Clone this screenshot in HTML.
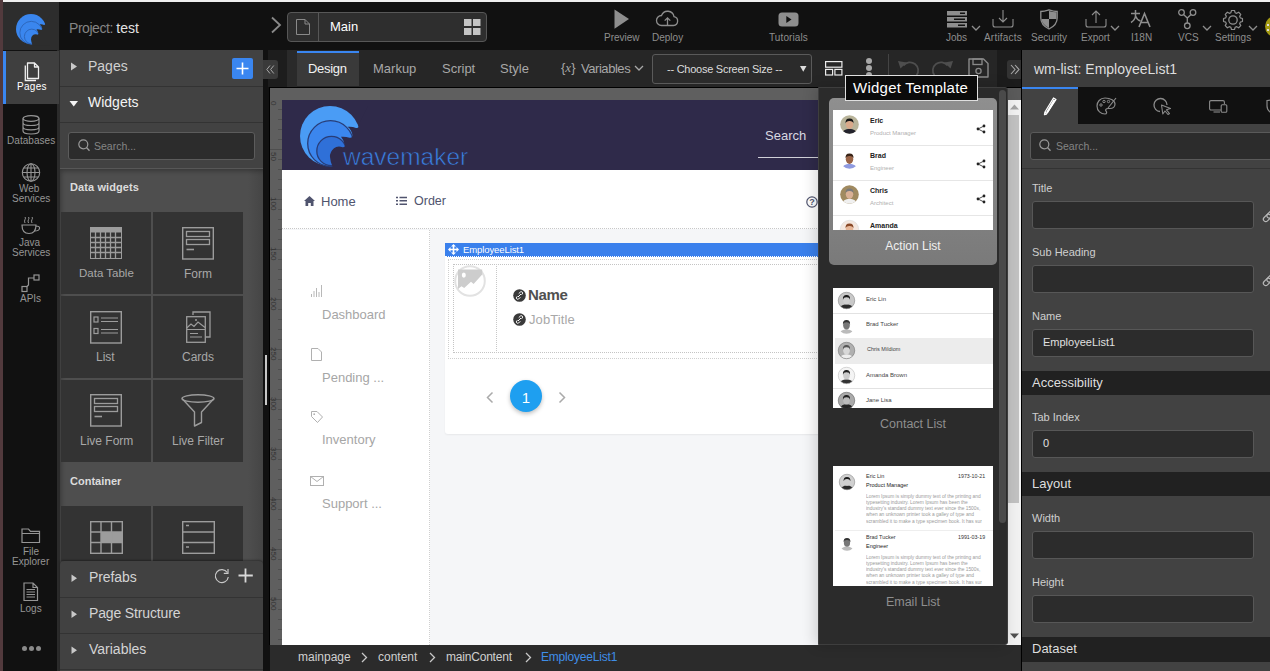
<!DOCTYPE html>
<html><head><meta charset="utf-8">
<style>
*{box-sizing:border-box;margin:0;padding:0}
html,body{width:1270px;height:671px;overflow:hidden;background:#111;font-family:"Liberation Sans",sans-serif;position:relative}
.a{position:absolute}
svg{position:absolute;overflow:visible}
.t{position:absolute;white-space:nowrap;line-height:1}
</style></head><body>
<!-- ===== TOP BAR ===== -->
<div class="a" style="left:0;top:0;width:1270px;height:2px;background:#efefef"></div>
<div class="a" style="left:0;top:0;width:3px;height:671px;background:#523a3d"></div>
<div class="a" style="left:3px;top:2px;width:1267px;height:48px;background:#111"></div>
<div class="a" style="left:3px;top:2px;width:56px;height:48px;background:#2d2d2d"></div>
<!-- small logo -->
<svg style="left:15px;top:13px" width="32" height="32" viewBox="0 0 64 64">
 <g transform="translate(-2,-2)">
 <circle cx="34" cy="34" r="30" fill="#3a86ee"/>
 <circle cx="34.5" cy="41.5" r="22.8" fill="#3a86ee" stroke="#2b5fae" stroke-width="1.6"/>
 <circle cx="35.5" cy="49" r="14.7" fill="#3a86ee" stroke="#2b5fae" stroke-width="1.6"/>
 <path d="M72,4 L63.5,21 Q63.6,26.4 60,25.9 Q56,24.2 51.5,24.8 Q55.5,27.5 56.5,33.4 Q56.6,36.2 53.5,35.7 Q49,34.3 45,34.8 Q47.8,38 48.9,43 Q49.3,45.6 46.5,45.2 Q41.5,43.6 38,46.2 Q33.6,50 34,55 Q34.4,60 36.5,64.6 L36.5,67 L72,67 Z" fill="#2d2d2d"/>
 </g>
</svg>
<div class="t" style="left:69px;top:21px;font-size:14px;color:#858585;letter-spacing:-0.45px">Project: <span style="color:#e2e2e2;letter-spacing:0">test</span></div>
<!-- chevron -->
<svg style="left:270px;top:16px" width="12" height="18"><path d="M2,1.5 L10,9 L2,16.5" fill="none" stroke="#8a8a8a" stroke-width="1.8"/></svg>
<!-- page selector -->
<div class="a" style="left:287px;top:12px;width:200px;height:30px;border:1px solid #575757;border-radius:4px;background:#2e2e2e"></div>
<div class="a" style="left:318px;top:13px;width:1px;height:28px;background:#575757"></div>
<svg style="left:296px;top:19px" width="14" height="16"><path d="M0.5,0.5 H9 L13.5,5 V15.5 H0.5 Z M9,0.5 V5 H13.5" fill="none" stroke="#8a8a8a" stroke-width="1"/></svg>
<div class="t" style="left:330px;top:20px;font-size:13px;color:#fff">Main</div>
<svg style="left:464px;top:19px" width="17" height="16"><rect x="0" y="0" width="7.5" height="7" fill="#c4c4c4"/><rect x="9" y="0" width="7.5" height="7" fill="#c4c4c4"/><rect x="0" y="9" width="7.5" height="7" fill="#c4c4c4"/><rect x="9" y="9" width="7.5" height="7" fill="#c4c4c4"/></svg>
<!-- Preview -->
<svg style="left:614px;top:9px" width="16" height="21"><path d="M0.5,0.5 L15,10 L0.5,19.8 Z" fill="#8e8e8e"/></svg>
<div class="t" style="left:604px;top:33px;font-size:10px;color:#8e8e8e">Preview</div>
<!-- Deploy -->
<svg style="left:656px;top:10px" width="23" height="17"><path d="M5.5,15.5 H17.5 A4.5,4.5 0 0 0 18,6.6 A6.5,6.5 0 0 0 5.5,5.5 A5,5 0 0 0 5.5,15.5 Z" fill="none" stroke="#8e8e8e" stroke-width="1.3"/><path d="M11.5,15.5 V8 M8.7,10.6 L11.5,7.8 L14.3,10.6" fill="none" stroke="#8e8e8e" stroke-width="1.3"/></svg>
<div class="t" style="left:652px;top:33px;font-size:10px;color:#8e8e8e">Deploy</div>
<!-- Tutorials -->
<svg style="left:778px;top:12px" width="21" height="15"><rect x="0.5" y="0.5" width="20" height="14" rx="3.5" fill="#8e8e8e"/><path d="M8.3,4 L13.5,7.5 L8.3,11 Z" fill="#111"/></svg>
<div class="t" style="left:769px;top:33px;font-size:10px;color:#8e8e8e;letter-spacing:0.1px">Tutorials</div>
<!-- Jobs -->
<svg style="left:947px;top:11px" width="21" height="17"><rect x="0" y="0" width="20" height="4.5" fill="#8e8e8e"/><rect x="0" y="6" width="20" height="4.5" fill="#8e8e8e"/><rect x="0" y="12" width="20" height="4.5" fill="#8e8e8e"/><rect x="13" y="1.5" width="5" height="1.5" fill="#111"/><rect x="7" y="7.5" width="11" height="1.5" fill="#111"/><rect x="11" y="13.5" width="7" height="1.5" fill="#111"/></svg>
<svg style="left:971px;top:25px" width="10" height="7"><path d="M1,1 L5,5 L9,1" fill="none" stroke="#8e8e8e" stroke-width="1.3"/></svg>
<div class="t" style="left:946px;top:33px;font-size:10px;color:#8e8e8e">Jobs</div>
<!-- Artifacts -->
<svg style="left:992px;top:10px" width="22" height="18"><path d="M1,9 V15 Q1,17 3,17 H19 Q21,17 21,15 V9" fill="none" stroke="#8e8e8e" stroke-width="1.1"/><path d="M11,0 V12 M7,8 L11,12 L15,8" fill="none" stroke="#8e8e8e" stroke-width="1.1"/></svg>
<div class="t" style="left:984px;top:33px;font-size:10px;color:#8e8e8e;letter-spacing:0.2px">Artifacts</div>
<!-- Security -->
<svg style="left:1040px;top:9px" width="18" height="21"><path d="M9,0.8 Q4,2.5 0.8,2.5 V9 Q0.8,16 9,20 Q17.2,16 17.2,9 V2.5 Q14,2.5 9,0.8 Z" fill="#111" stroke="#8e8e8e" stroke-width="1.3"/><path d="M9,2 Q13,3.2 16.5,3.2 V10 H9 Z M9,10 V19 Q2,15.5 1.5,10 Z" fill="#8e8e8e"/></svg>
<div class="t" style="left:1031px;top:33px;font-size:10px;color:#8e8e8e">Security</div>
<!-- Export -->
<svg style="left:1085px;top:10px" width="22" height="18"><path d="M1,9 V15 Q1,17 3,17 H19 Q21,17 21,15 V9" fill="none" stroke="#8e8e8e" stroke-width="1.1"/><path d="M11,13 V1 M7,5 L11,1 L15,5" fill="none" stroke="#8e8e8e" stroke-width="1.1"/></svg>
<svg style="left:1110px;top:25px" width="10" height="7"><path d="M1,1 L5,5 L9,1" fill="none" stroke="#8e8e8e" stroke-width="1.3"/></svg>
<div class="t" style="left:1081px;top:33px;font-size:10px;color:#8e8e8e">Export</div>
<!-- I18N -->
<svg style="left:1130px;top:10px" width="22" height="18"><path d="M1,3.5 H10 M5.5,0 V6 Q5,10 1,12.5 M5.5,6 Q7,10 10.5,11" fill="none" stroke="#8e8e8e" stroke-width="1.5"/><path d="M9,17 L14.5,3.5 L20,17 M11,12.5 H18" fill="none" stroke="#8e8e8e" stroke-width="1.6"/></svg>
<div class="t" style="left:1131px;top:33px;font-size:10px;color:#8e8e8e">I18N</div>
<!-- VCS -->
<svg style="left:1178px;top:9px" width="19" height="21"><circle cx="3.5" cy="3.5" r="2.8" fill="none" stroke="#8e8e8e" stroke-width="1.3"/><circle cx="15" cy="3.5" r="2.8" fill="none" stroke="#8e8e8e" stroke-width="1.3"/><circle cx="9.3" cy="16.8" r="2.8" fill="none" stroke="#8e8e8e" stroke-width="1.3"/><path d="M5.5,5.5 L9.3,9 L13,5.5 M9.3,9 V14" fill="none" stroke="#8e8e8e" stroke-width="1.3"/></svg>
<svg style="left:1202px;top:25px" width="10" height="7"><path d="M1,1 L5,5 L9,1" fill="none" stroke="#8e8e8e" stroke-width="1.3"/></svg>
<div class="t" style="left:1178px;top:33px;font-size:10px;color:#8e8e8e">VCS</div>
<!-- Settings -->
<svg style="left:1222px;top:9px" width="22" height="22" viewBox="-11 -11 22 22"><path d="M-2.12,-7.30 L-1.50,-9.48 L1.50,-9.48 L2.12,-7.30 L3.66,-6.66 L5.64,-7.77 L7.77,-5.64 L6.66,-3.66 L7.30,-2.12 L9.48,-1.50 L9.48,1.50 L7.30,2.12 L6.66,3.66 L7.77,5.64 L5.64,7.77 L3.66,6.66 L2.12,7.30 L1.50,9.48 L-1.50,9.48 L-2.12,7.30 L-3.66,6.66 L-5.64,7.77 L-7.77,5.64 L-6.66,3.66 L-7.30,2.12 L-9.48,1.50 L-9.48,-1.50 L-7.30,-2.12 L-6.66,-3.66 L-7.77,-5.64 L-5.64,-7.77 L-3.66,-6.66 Z" fill="none" stroke="#8e8e8e" stroke-width="1.2" stroke-linejoin="round"/><circle cx="0" cy="0" r="4.2" fill="none" stroke="#8e8e8e" stroke-width="1.3"/></svg>
<svg style="left:1248px;top:25px" width="10" height="7"><path d="M1,1 L5,5 L9,1" fill="none" stroke="#8e8e8e" stroke-width="1.3"/></svg>
<div class="t" style="left:1215px;top:33px;font-size:10px;color:#8e8e8e">Settings</div>
<!-- avatar -->
<div class="a" style="left:1265px;top:16px;width:21px;height:21px;border-radius:50%;background:#a39a12"></div>
<div class="a" style="left:1267px;top:24px;width:2px;height:2px;background:#ddd"></div>
<div class="a" style="left:1267px;top:29px;width:2px;height:2px;background:#ddd"></div>
<!-- ===== LEFT ICON SIDEBAR ===== -->
<div class="a" style="left:3px;top:50px;width:54px;height:621px;background:#111"></div>
<div class="a" style="left:57px;top:50px;width:3px;height:621px;background:#2b2b2b"></div>
<div class="a" style="left:3px;top:51px;width:56px;height:53px;background:#3f3f3f"></div>
<div class="a" style="left:3px;top:51px;width:3px;height:53px;background:#3a86f0"></div>
<!-- Pages icon -->
<svg style="left:23px;top:62px" width="18" height="20"><path d="M4.5,1 H11.5 L15.5,5 V16.5 H4.5 Z M11.5,1 V5 H15.5" fill="none" stroke="#f0f0f0" stroke-width="1.3" stroke-linejoin="round"/><path d="M2.3,3.5 V18.5 H13" fill="none" stroke="#f0f0f0" stroke-width="1.3"/></svg>
<div class="t" style="left:17px;top:82px;font-size:10px;color:#fff;letter-spacing:0.3px">Pages</div>
<!-- Databases -->
<svg style="left:22px;top:115px" width="18" height="20"><ellipse cx="9" cy="3.5" rx="8" ry="2.8" fill="none" stroke="#959595" stroke-width="1.2"/><path d="M1,3.5 V16 Q1,19 9,19 Q17,19 17,16 V3.5 M1,7.7 Q1,10.5 9,10.5 Q17,10.5 17,7.7 M1,12 Q1,14.8 9,14.8 Q17,14.8 17,12" fill="none" stroke="#959595" stroke-width="1.2"/></svg>
<div class="t" style="left:7px;top:136px;font-size:10px;color:#959595;letter-spacing:0.05px">Databases</div>
<!-- Web Services -->
<svg style="left:21px;top:163px" width="20" height="19"><circle cx="10" cy="9.5" r="8.7" fill="none" stroke="#959595" stroke-width="1.1"/><ellipse cx="10" cy="9.5" rx="4" ry="8.7" fill="none" stroke="#959595" stroke-width="1.1"/><path d="M10,0.8 V18.2 M1.3,9.5 H18.7 M2.5,5 H17.5 M2.5,14 H17.5" fill="none" stroke="#959595" stroke-width="1.1"/></svg>
<div class="t" style="left:19px;top:184px;font-size:10px;color:#959595">Web</div>
<div class="t" style="left:12px;top:194px;font-size:10px;color:#959595">Services</div>
<!-- Java Services -->
<svg style="left:21px;top:217px" width="20" height="18"><path d="M4,6 Q3,4 4,2.5 Q5,1 4,0 M7.5,6 Q6.5,4 7.5,2.5 Q8.5,1 7.5,0 M11,6 Q10,4 11,2.5 Q12,1 11,0" fill="none" stroke="#959595" stroke-width="1"/><path d="M1,8 H15 Q15,16.5 8,16.5 Q1,16.5 1,8 Z M15,9 Q19,9 18.5,11.5 Q18,14 13.5,14" fill="none" stroke="#959595" stroke-width="1.2"/></svg>
<div class="t" style="left:19px;top:238px;font-size:10px;color:#959595">Java</div>
<div class="t" style="left:12px;top:248px;font-size:10px;color:#959595">Services</div>
<!-- APIs -->
<svg style="left:21px;top:274px" width="20" height="19"><rect x="1" y="12.5" width="5" height="5" fill="none" stroke="#959595" stroke-width="1.2"/><rect x="13" y="1" width="5" height="5" fill="none" stroke="#959595" stroke-width="1.2"/><path d="M6,12.5 L7.5,11 V4 L13,4" fill="none" stroke="#959595" stroke-width="1.2"/></svg>
<div class="t" style="left:20px;top:294px;font-size:10px;color:#959595">APIs</div>
<!-- File Explorer -->
<svg style="left:21px;top:528px" width="20" height="16"><path d="M1,1 H7.5 L9.5,3.3 H18.5 V14.5 H1 Z M1,5.5 H18.5" fill="none" stroke="#959595" stroke-width="1.2"/></svg>
<div class="t" style="left:23px;top:547px;font-size:10px;color:#959595">File</div>
<div class="t" style="left:12px;top:557px;font-size:10px;color:#959595">Explorer</div>
<!-- Logs -->
<svg style="left:23px;top:582px" width="16" height="20"><path d="M1,1 H10 L14.5,5.5 V18.5 H1 Z M10,1 V5.5 H14.5" fill="none" stroke="#959595" stroke-width="1.2"/><path d="M3.5,7.5 H12 M3.5,10 H12 M3.5,12.5 H12 M3.5,15 H12" stroke="#959595" stroke-width="1"/></svg>
<div class="t" style="left:20px;top:604px;font-size:10px;color:#959595">Logs</div>
<!-- dots -->
<div class="a" style="left:22px;top:646px;width:5px;height:5px;border-radius:50%;background:#8a8a8a"></div>
<div class="a" style="left:29px;top:646px;width:5px;height:5px;border-radius:50%;background:#8a8a8a"></div>
<div class="a" style="left:36px;top:646px;width:5px;height:5px;border-radius:50%;background:#8a8a8a"></div>
<!-- ===== LEFT PANEL ===== -->
<div class="a" style="left:60px;top:50px;width:203px;height:621px;background:#424242"></div>
<!-- Pages row -->
<div class="a" style="left:60px;top:86px;width:203px;height:1px;background:#333"></div>
<svg style="left:70px;top:62px" width="8" height="9"><path d="M1,0.5 L7,4.5 L1,8.5 Z" fill="#c8c8c8"/></svg>
<div class="t" style="left:88px;top:59px;font-size:14px;color:#d0d0d0">Pages</div>
<div class="a" style="left:232px;top:58px;width:21px;height:21px;border-radius:2px;background:#3a86f0"></div>
<svg style="left:232px;top:58px" width="21" height="21"><path d="M10.5,4.5 V16.5 M4.5,10.5 H16.5" stroke="#fff" stroke-width="1.6"/></svg>
<!-- Widgets row -->
<div class="a" style="left:60px;top:122px;width:203px;height:1px;background:#333"></div>
<svg style="left:69px;top:100px" width="10" height="8"><path d="M0.5,1 L9,1 L4.75,6.5 Z" fill="#f4f4f4"/></svg>
<div class="t" style="left:88px;top:95px;font-size:14px;color:#f4f4f4">Widgets</div>
<!-- search -->
<div class="a" style="left:68px;top:132px;width:187px;height:28px;border:1px solid #5c5c5c;border-radius:3px;background:#2c2c2c"></div>
<svg style="left:78px;top:139px" width="12" height="13"><circle cx="5.3" cy="5.3" r="4.5" fill="none" stroke="#9a9a9a" stroke-width="1.2"/><path d="M8.5,8.5 L11.5,11.8" stroke="#9a9a9a" stroke-width="1.3"/></svg>
<div class="t" style="left:94px;top:141px;font-size:10.5px;color:#858585">Search...</div>
<div class="a" style="left:60px;top:168px;width:203px;height:1px;background:#575757"></div>
<!-- widgets scroll area -->
<div class="a" style="left:60px;top:169px;width:203px;height:392px;background:#4e4e4e;overflow:hidden">
 <div class="a" style="left:188px;top:0;width:15px;height:392px;background:linear-gradient(90deg,#4e4e4e,#454545)"></div>
 <div class="a" style="left:0;top:0;width:203px;height:392px;box-shadow:inset 3px 4px 5px -2px rgba(0,0,0,0.3)"></div>
</div>
<div class="t" style="left:70px;top:182px;font-size:11px;font-weight:bold;color:#dcdcdc;letter-spacing:0.1px">Data widgets</div>
<!-- tiles -->
<div class="a" style="left:61px;top:212px;width:90px;height:82px;background:#333"></div>
<div class="a" style="left:153px;top:212px;width:90px;height:82px;background:#333"></div>
<div class="a" style="left:61px;top:296px;width:90px;height:82px;background:#333"></div>
<div class="a" style="left:153px;top:296px;width:90px;height:82px;background:#333"></div>
<div class="a" style="left:61px;top:380px;width:90px;height:82px;background:#333"></div>
<div class="a" style="left:153px;top:380px;width:90px;height:82px;background:#333"></div>
<div class="a" style="left:61px;top:506px;width:90px;height:55px;background:#333"></div>
<div class="a" style="left:153px;top:506px;width:90px;height:55px;background:#333"></div>
<!-- Data Table icon -->
<svg style="left:90px;top:227px" width="32" height="32"><rect x="0.5" y="0.5" width="31" height="31" fill="none" stroke="#9c9c9c" stroke-width="1"/><rect x="0.5" y="0.5" width="31" height="5" fill="#9c9c9c"/><path d="M0.5,10.5 H31.5 M0.5,15.5 H31.5 M0.5,20.5 H31.5 M0.5,25.5 H31.5 M5.5,5 V31.5 M10.5,5 V31.5 M15.5,5 V31.5 M20.5,5 V31.5 M25.5,5 V31.5" stroke="#9c9c9c" stroke-width="1.3"/></svg>
<div class="t" style="left:79px;top:268px;font-size:11.5px;color:#a8a8a8">Data Table</div>
<!-- Form icon -->
<svg style="left:182px;top:227px" width="32" height="33"><rect x="0.7" y="0.7" width="30.6" height="31.3" fill="none" stroke="#9c9c9c" stroke-width="1.4"/><rect x="4.5" y="4.5" width="23" height="5" fill="none" stroke="#9c9c9c" stroke-width="1.3"/><rect x="4.5" y="12.5" width="23" height="5" fill="none" stroke="#9c9c9c" stroke-width="1.3"/><path d="M4.5,22.5 H12" stroke="#9c9c9c" stroke-width="1.6"/></svg>
<div class="t" style="left:184px;top:268px;font-size:12px;color:#a8a8a8">Form</div>
<!-- List icon -->
<svg style="left:90px;top:311px" width="32" height="33"><rect x="0.7" y="0.7" width="30.6" height="31.3" fill="none" stroke="#9c9c9c" stroke-width="1.4"/><rect x="4" y="6" width="4" height="5" fill="none" stroke="#9c9c9c" stroke-width="1.2"/><rect x="4" y="17.5" width="4" height="5" fill="none" stroke="#9c9c9c" stroke-width="1.2"/><path d="M11,7 H28 M11,10.5 H28 M11,18.5 H28 M11,22 H28" stroke="#9c9c9c" stroke-width="1.2"/></svg>
<div class="t" style="left:96px;top:351px;font-size:12px;color:#a8a8a8">List</div>
<!-- Cards icon -->
<svg style="left:186px;top:311px" width="25" height="32"><path d="M7,4 V1 H24 V26 H19.5" fill="none" stroke="#9c9c9c" stroke-width="1.3"/><rect x="0.7" y="5.7" width="18.6" height="25.6" fill="none" stroke="#9c9c9c" stroke-width="1.3"/><path d="M0.7,17 L5,13 L8,15.5 L12,11 L19,16.5" fill="none" stroke="#9c9c9c" stroke-width="1.2"/><circle cx="10" cy="9" r="1" fill="#9c9c9c"/><path d="M0.7,18.5 H19 M4,22.5 H12 M4,26 H16" stroke="#9c9c9c" stroke-width="1.2"/></svg>
<div class="t" style="left:182px;top:351px;font-size:12px;color:#a8a8a8">Cards</div>
<!-- Live Form icon -->
<svg style="left:90px;top:394px" width="32" height="33"><rect x="0.7" y="0.7" width="30.6" height="31.3" fill="none" stroke="#9c9c9c" stroke-width="1.4"/><rect x="4.5" y="4.5" width="23" height="5" fill="none" stroke="#9c9c9c" stroke-width="1.3"/><rect x="4.5" y="12.5" width="23" height="5" fill="none" stroke="#9c9c9c" stroke-width="1.3"/><path d="M4.5,22.5 H12" stroke="#9c9c9c" stroke-width="1.6"/></svg>
<div class="t" style="left:80px;top:435px;font-size:12px;color:#a8a8a8">Live Form</div>
<!-- Live Filter icon -->
<svg style="left:181px;top:394px" width="34" height="33"><ellipse cx="17" cy="4.5" rx="16" ry="3.8" fill="none" stroke="#9c9c9c" stroke-width="1.4"/><path d="M1,4.5 L13.5,18 V32 L20.5,28.5 V18 L33,4.5" fill="none" stroke="#9c9c9c" stroke-width="1.4" stroke-linejoin="round"/></svg>
<div class="t" style="left:172px;top:435px;font-size:12px;color:#a8a8a8">Live Filter</div>
<div class="t" style="left:70px;top:476px;font-size:11px;font-weight:bold;color:#dcdcdc">Container</div>
<!-- grid layout icon -->
<svg style="left:90px;top:521px" width="33" height="33"><rect x="0.7" y="0.7" width="31.6" height="31.6" fill="none" stroke="#9c9c9c" stroke-width="1.4"/><rect x="11" y="11" width="21" height="10.5" fill="#9c9c9c"/><path d="M11,0.7 V32 M21.5,0.7 V32 M0.7,11 H32 M0.7,21.5 H32" stroke="#9c9c9c" stroke-width="1.4"/></svg>
<svg style="left:182px;top:521px" width="33" height="33"><rect x="0.7" y="0.7" width="31.6" height="31.6" fill="none" stroke="#9c9c9c" stroke-width="1.4"/><path d="M0.7,11 H32 M0.7,21.5 H32" stroke="#9c9c9c" stroke-width="1.4"/><path d="M4,4.5 H7 M4,26 H7" stroke="#9c9c9c" stroke-width="1.4"/></svg>
<!-- bottom accordions -->
<div class="a" style="left:60px;top:561px;width:203px;height:110px;background:#414141;border-radius:4px 4px 0 0;box-shadow:0 -1px 2px rgba(0,0,0,0.35)"></div>
<div class="a" style="left:60px;top:597px;width:203px;height:1px;background:#333"></div>
<div class="a" style="left:60px;top:633px;width:203px;height:1px;background:#333"></div>
<div class="a" style="left:60px;top:669px;width:203px;height:1px;background:#333"></div>
<svg style="left:71px;top:574px" width="7" height="9"><path d="M0.5,0.5 L6,4.3 L0.5,8 Z" fill="#c8c8c8"/></svg>
<div class="t" style="left:89px;top:570px;font-size:14px;color:#d4d4d4;letter-spacing:-0.1px">Prefabs</div>
<svg style="left:214px;top:568px" width="17" height="16"><path d="M13.3,4.5 A6.5,6.5 0 1 0 14.3,9" fill="none" stroke="#c8c8c8" stroke-width="1.2"/><path d="M14,1 V5.3 H9.8" fill="none" stroke="#c8c8c8" stroke-width="1.2"/></svg>
<svg style="left:238px;top:568px" width="16" height="16"><path d="M7.5,0.5 V14.5 M0.5,7.5 H14.8" stroke="#d8d8d8" stroke-width="1.8"/></svg>
<svg style="left:71px;top:610px" width="7" height="9"><path d="M0.5,0.5 L6,4.3 L0.5,8 Z" fill="#c8c8c8"/></svg>
<div class="t" style="left:89px;top:606px;font-size:14px;color:#d4d4d4;letter-spacing:-0.15px">Page Structure</div>
<svg style="left:71px;top:646px" width="7" height="9"><path d="M0.5,0.5 L6,4.3 L0.5,8 Z" fill="#c8c8c8"/></svg>
<div class="t" style="left:89px;top:642px;font-size:14px;color:#d4d4d4">Variables</div>
<!-- divider strip -->
<div class="a" style="left:263px;top:50px;width:7px;height:621px;background:#111"></div>
<div class="a" style="left:265px;top:355px;width:2px;height:50px;background:#c8c8c8"></div>
<!-- ===== TOOLBAR ===== -->
<div class="a" style="left:270px;top:50px;width:752px;height:37px;background:#262626"></div>
<div class="a" style="left:268px;top:50px;width:19px;height:37px;background:#1d1d1d"></div>
<div class="a" style="left:287px;top:50px;width:10px;height:37px;background:#2a2a2a"></div>
<div class="a" style="left:297px;top:51px;width:62px;height:35px;background:#3a3a3a"></div>
<div class="a" style="left:297px;top:51px;width:62px;height:2px;background:#3a86f0"></div>
<div class="t" style="left:308px;top:62px;font-size:13px;color:#f2f2f2;letter-spacing:-0.3px">Design</div>
<div class="t" style="left:373px;top:62px;font-size:13px;color:#a8a8a8">Markup</div>
<div class="t" style="left:442px;top:62px;font-size:13px;color:#a8a8a8">Script</div>
<div class="t" style="left:500px;top:62px;font-size:13px;color:#a8a8a8">Style</div>
<div class="t" style="left:561px;top:61px;font-size:13px;color:#a8a8a8">{<span style="font-family:'Liberation Serif';font-style:italic">x</span>}</div>
<div class="t" style="left:581px;top:62px;font-size:13px;color:#a8a8a8;letter-spacing:-0.45px">Variables</div>
<svg style="left:634px;top:65px" width="10" height="7"><path d="M1,1 L5,5 L9,1" fill="none" stroke="#a8a8a8" stroke-width="1.3"/></svg>
<!-- select -->
<div class="a" style="left:652px;top:54px;width:160px;height:30px;border:1px solid #5a5a5a;border-radius:3px;background:#2b2b2b"></div>
<div class="t" style="left:667px;top:64px;font-size:11px;color:#dcdcdc;letter-spacing:-0.25px">-- Choose Screen Size --</div>
<svg style="left:800px;top:66px" width="7" height="6"><path d="M0,0 H6.5 L3.25,5.8 Z" fill="#dcdcdc"/></svg>
<!-- layout icon -->
<svg style="left:825px;top:61px" width="18" height="15"><rect x="0.6" y="0.6" width="16.3" height="5.6" fill="none" stroke="#ececec" stroke-width="1.2"/><rect x="0.6" y="8.4" width="7" height="5.6" fill="none" stroke="#ececec" stroke-width="1.2"/><rect x="9.9" y="8.4" width="7" height="5.6" fill="none" stroke="#ececec" stroke-width="1.2"/></svg>
<!-- kebab -->
<div class="a" style="left:866px;top:58px;width:6px;height:6px;border-radius:50%;background:#a8a8a8"></div>
<div class="a" style="left:866px;top:65px;width:6px;height:6px;border-radius:50%;background:#a8a8a8"></div>
<div class="a" style="left:866px;top:72px;width:6px;height:6px;border-radius:50%;background:#a8a8a8"></div>
<div class="a" style="left:888px;top:54px;width:1px;height:22px;background:#444"></div>
<!-- undo / redo -->
<svg style="left:897px;top:60px" width="22" height="17"><path d="M19.5,15.5 A7.8,7.8 0 0 0 6.5,5.5" fill="none" stroke="#4e4e4e" stroke-width="1.7"/><path d="M1,1 L9.5,2.5 L3.5,8.5 Z" fill="#4e4e4e"/></svg>
<svg style="left:932px;top:60px" width="22" height="17"><path d="M2.5,15.5 A7.8,7.8 0 0 1 15.5,5.5" fill="none" stroke="#4e4e4e" stroke-width="1.7"/><path d="M21,1 L12.5,2.5 L18.5,8.5 Z" fill="#4e4e4e"/></svg>
<!-- save -->
<svg style="left:968px;top:58px" width="21" height="20"><path d="M1,1 H15.5 L20,5.5 V19 H1 Z" fill="none" stroke="#8a8a8a" stroke-width="1.4" stroke-linejoin="round"/><rect x="5" y="1" width="9" height="5.5" fill="none" stroke="#8a8a8a" stroke-width="1.3"/><circle cx="10.5" cy="13" r="2.6" fill="none" stroke="#8a8a8a" stroke-width="1.3"/></svg>
<div class="a" style="left:997px;top:50px;width:25px;height:37px;background:#1c1c1c"></div>
<div class="a" style="left:1007px;top:60px;width:15px;height:19px;border-radius:3px 0 0 3px;background:#333"></div>
<svg style="left:1010px;top:64px" width="10" height="11"><path d="M1,1 L5,5.5 L1,10 M5,1 L9,5.5 L5,10" fill="none" stroke="#a8a8a8" stroke-width="1.1"/></svg>

<div class="a" style="left:263px;top:60px;width:15px;height:19px;border-radius:0 3px 3px 0;background:#3a3a3a"></div>
<svg style="left:266px;top:64.5px" width="9" height="9"><path d="M4,0.5 L0.8,4.5 L4,8.5 M7.8,0.5 L4.6,4.5 L7.8,8.5" fill="none" stroke="#a8a8a8" stroke-width="1"/></svg>

<!-- ===== CANVAS ===== -->
<div class="a" style="left:269px;top:87px;width:753px;height:558px;background:#000"></div>
<div class="a" style="left:270px;top:88px;width:737px;height:557px;background:#5f5f5f"></div>
<!-- ruler ticks -->
<svg style="left:270px;top:88px" width="12" height="557">
 <g stroke="#4e4e4e" stroke-width="1">
 <path d="M8,21.5 H12 M8,31.5 H12 M8,41.5 H12 M8,51.5 H12 M8,61.5 H12 M8,71.5 H12 M8,81.5 H12 M8,91.5 H12 M8,101.5 H12 M8,111.5 H12 M8,121.5 H12 M8,131.5 H12 M8,141.5 H12 M8,151.5 H12 M8,161.5 H12 M8,171.5 H12 M8,181.5 H12 M8,191.5 H12 M8,201.5 H12 M8,211.5 H12 M8,221.5 H12 M8,231.5 H12 M8,241.5 H12 M8,251.5 H12 M8,261.5 H12 M8,271.5 H12 M8,281.5 H12 M8,291.5 H12 M8,301.5 H12 M8,311.5 H12 M8,321.5 H12 M8,331.5 H12 M8,341.5 H12 M8,351.5 H12 M8,361.5 H12 M8,371.5 H12 M8,381.5 H12 M8,391.5 H12 M8,401.5 H12 M8,411.5 H12 M8,421.5 H12 M8,431.5 H12 M8,441.5 H12 M8,451.5 H12 M8,461.5 H12 M8,471.5 H12 M8,481.5 H12 M8,491.5 H12 M8,501.5 H12 M8,511.5 H12 M8,521.5 H12 M8,531.5 H12 M8,541.5 H12 M8,551.5 H12"/>
 <path d="M0,61.5 H12 M0,111.5 H12 M0,161.5 H12 M0,211.5 H12 M0,261.5 H12 M0,311.5 H12 M0,361.5 H12 M0,411.5 H12 M0,461.5 H12 M0,511.5 H12"/>
 </g>
</svg>
<div class="t" style="left:276.5px;top:101px;font-size:8px;color:#333;transform:rotate(90deg);transform-origin:0 0">0</div>
<div class="t" style="left:276.5px;top:151.5px;font-size:8px;color:#333;transform:rotate(90deg);transform-origin:0 0">50</div>
<div class="t" style="left:276.5px;top:196.5px;font-size:8px;color:#333;transform:rotate(90deg);transform-origin:0 0">100</div>
<div class="t" style="left:276.5px;top:246.5px;font-size:8px;color:#333;transform:rotate(90deg);transform-origin:0 0">150</div>
<div class="t" style="left:276.5px;top:296.5px;font-size:8px;color:#333;transform:rotate(90deg);transform-origin:0 0">200</div>
<div class="t" style="left:276.5px;top:346.5px;font-size:8px;color:#333;transform:rotate(90deg);transform-origin:0 0">250</div>
<div class="t" style="left:276.5px;top:396.5px;font-size:8px;color:#333;transform:rotate(90deg);transform-origin:0 0">300</div>
<div class="t" style="left:276.5px;top:446.5px;font-size:8px;color:#333;transform:rotate(90deg);transform-origin:0 0">350</div>
<div class="t" style="left:276.5px;top:496.5px;font-size:8px;color:#333;transform:rotate(90deg);transform-origin:0 0">400</div>
<div class="t" style="left:276.5px;top:546.5px;font-size:8px;color:#333;transform:rotate(90deg);transform-origin:0 0">450</div>
<div class="t" style="left:276.5px;top:596.5px;font-size:8px;color:#333;transform:rotate(90deg);transform-origin:0 0">500</div>

<!-- page -->
<div class="a" style="left:282px;top:100px;width:725px;height:545px;background:#f5f6f8;overflow:hidden">
 <!-- header -->
 <div class="a" style="left:0;top:0;width:725px;height:70px;background:#2f2a4a"></div>
 <svg style="left:14px;top:2px" width="66" height="66" viewBox="0 0 66 66">
  <circle cx="34" cy="34" r="30" fill="#4a9cf5"/>
  <circle cx="34.5" cy="41.5" r="22.8" fill="#3b86ee" stroke="#283d78" stroke-width="1.3"/>
  <circle cx="35.5" cy="49" r="14.7" fill="#2f70d8" stroke="#283d78" stroke-width="1.3"/>
  <path d="M72,4 L63.5,21 Q63.6,26.4 60,25.9 Q56,24.2 51.5,24.8 Q55.5,27.5 56.5,33.4 Q56.6,36.2 53.5,35.7 Q49,34.3 45,34.8 Q47.8,38 48.9,43 Q49.3,45.6 46.5,45.2 Q41.5,43.6 38,46.2 Q33.6,50 34,55 Q34.4,60 36.5,64.6 L36.5,67 L72,67 Z" fill="#2f2a4a"/>
 </svg>
 <div class="t" style="left:61px;top:45px;font-size:24.5px;color:#3a7fe2;-webkit-text-stroke:0.6px #2f2a4a">wavemaker</div>
 <div class="t" style="left:483px;top:29px;font-size:13px;color:#d8d8e0">Search</div>
 <div class="a" style="left:476px;top:57px;width:249px;height:1px;background:#d0d0d8"></div>
 <!-- nav -->
 <div class="a" style="left:0;top:70px;width:725px;height:59px;background:#fff;border-bottom:1px dotted #c8c8c8"></div>
 <svg style="left:22px;top:96px" width="11" height="10"><path d="M5.5,0 L11,5 H9.5 V10 H6.8 V7 H4.2 V10 H1.5 V5 H0 Z" fill="#50546e"/></svg>
 <div class="t" style="left:39px;top:95px;font-size:13px;color:#50546e">Home</div>
 <svg style="left:114px;top:96px" width="11" height="10"><path d="M0,1.5 H2 M0,4.8 H2 M0,8.2 H2 M3.5,1.5 H11 M3.5,4.8 H11 M3.5,8.2 H11" stroke="#50546e" stroke-width="1.4"/></svg>
 <div class="t" style="left:132px;top:95px;font-size:12.5px;color:#50546e">Order</div>
 <svg style="left:524px;top:96px" width="12" height="12"><circle cx="6" cy="6" r="5.2" fill="none" stroke="#50546e" stroke-width="1.2"/><text x="6" y="9.2" font-size="9" font-weight="bold" text-anchor="middle" fill="#50546e" font-family="Liberation Sans">?</text></svg>
 <!-- left nav -->
 <div class="a" style="left:0;top:130px;width:148px;height:415px;background:#fff;border-right:1px dotted #cfcfcf"></div>
 <svg style="left:29px;top:185px" width="12" height="12"><path d="M0.5,12 V9 M3,12 V6 M5.5,12 V3 M8,12 V7 M10.5,12 V0" stroke="#b0b0b0" stroke-width="0.9"/></svg>
 <div class="t" style="left:40px;top:208px;font-size:13px;color:#a6a6a6">Dashboard</div>
 <svg style="left:29px;top:248px" width="11" height="13"><path d="M0.5,0.5 H7 L10.5,4 V12.5 H0.5 Z" fill="none" stroke="#b0b0b0" stroke-width="1"/></svg>
 <div class="t" style="left:40px;top:271px;font-size:13px;color:#a6a6a6">Pending ...</div>
 <svg style="left:29px;top:311px" width="12" height="13"><path d="M0.5,0.5 H6 L11.5,6 L6.5,11.5 L0.5,5.5 Z" fill="none" stroke="#b0b0b0" stroke-width="1"/><circle cx="3.2" cy="3.2" r="0.9" fill="#b0b0b0"/></svg>
 <div class="t" style="left:40px;top:333px;font-size:13px;color:#a6a6a6">Inventory</div>
 <svg style="left:28px;top:376px" width="14" height="10"><rect x="0.5" y="0.5" width="13" height="9" fill="none" stroke="#b0b0b0" stroke-width="1"/><path d="M0.5,0.5 L7,5.5 L13.5,0.5" fill="none" stroke="#b0b0b0" stroke-width="1"/></svg>
 <div class="t" style="left:40px;top:397px;font-size:13px;color:#a6a6a6">Support ...</div>
 <!-- list widget -->
 <div class="a" style="left:163px;top:143px;width:562px;height:14px;background:#3a80ec;border-bottom:1px dotted #fff"></div>
 <svg style="left:166px;top:144px" width="11" height="11"><path d="M5.5,0 L8,2.5 H6.3 V4.7 H8.5 V3 L11,5.5 L8.5,8 V6.3 H6.3 V8.5 H8 L5.5,11 L3,8.5 H4.7 V6.3 H2.5 V8 L0,5.5 L2.5,3 V4.7 H4.7 V2.5 H3 Z" fill="#fff"/></svg>
 <div class="t" style="left:181px;top:145px;font-size:9.5px;color:#fff;letter-spacing:-0.1px">EmployeeList1</div>
 <div class="a" style="left:163px;top:157px;width:562px;height:177px;background:#fff;border-radius:0 0 3px 3px;box-shadow:0 1px 2px rgba(0,0,0,0.06)"></div>
 <div class="a" style="left:166px;top:159px;width:559px;height:100px;border:1px dotted #cfcfcf"></div>
 <div class="a" style="left:171px;top:164px;width:554px;height:89px;border:1px dotted #c4c4c4"></div>
 <div class="a" style="left:214px;top:164px;width:1px;height:89px;border-left:1px dotted #c8c8c8"></div>
 <svg style="left:172px;top:165px" width="32" height="32"><circle cx="16" cy="16" r="14.8" fill="#fff" stroke="#e2e2e2" stroke-width="2"/><path d="M4,4.5 H28.2 V9.5 L19.6,19 L17,16.8 L10.2,23 L7.5,21.3 L4,24 Z" fill="#cdcdcd"/><ellipse cx="9.8" cy="10.1" rx="2" ry="2.6" fill="#fff"/></svg>
 <svg style="left:231px;top:189px" width="13" height="13"><circle cx="6.5" cy="6.5" r="6.3" fill="#3a3a3a"/><path d="M4.5,7.2 L3.6,8.1 A1.4,1.4 0 0 0 5.6,10 L7.3,8.3 M8.5,5.8 L9.4,4.9 A1.4,1.4 0 0 0 7.4,3 L5.7,4.7 M5,8 L8,5" fill="none" stroke="#fff" stroke-width="1"/></svg>
 <div class="t" style="left:246px;top:187px;font-size:15px;font-weight:bold;color:#505050;letter-spacing:-0.3px">Name</div>
 <svg style="left:231px;top:213px" width="13" height="13"><circle cx="6.5" cy="6.5" r="6.3" fill="#3a3a3a"/><path d="M4.5,7.2 L3.6,8.1 A1.4,1.4 0 0 0 5.6,10 L7.3,8.3 M8.5,5.8 L9.4,4.9 A1.4,1.4 0 0 0 7.4,3 L5.7,4.7 M5,8 L8,5" fill="none" stroke="#fff" stroke-width="1"/></svg>
 <div class="t" style="left:247px;top:213px;font-size:13px;color:#a8a8a8;letter-spacing:0.1px">JobTitle</div>
 <!-- pagination -->
 <svg style="left:204px;top:292px" width="8" height="11"><path d="M6.5,0.5 L1.5,5.5 L6.5,10.5" fill="none" stroke="#aaa" stroke-width="1.5"/></svg>
 <div class="a" style="left:228px;top:280px;width:32px;height:32px;border-radius:50%;background:#1e9ff0;box-shadow:0 2px 4px rgba(0,0,0,0.25)"></div>
 <div class="t" style="left:228px;top:290px;width:32px;text-align:center;font-size:15px;color:#fff">1</div>
 <svg style="left:276px;top:292px" width="8" height="11"><path d="M1.5,0.5 L6.5,5.5 L1.5,10.5" fill="none" stroke="#aaa" stroke-width="1.5"/></svg>
</div>
<!-- canvas scrollbar -->
<div class="a" style="left:1007px;top:88px;width:14px;height:557px;background:#f1f1f1"></div>
<div class="a" style="left:1007px;top:88px;width:14px;height:12px;background:#5a5a5a"></div>
<svg style="left:1010px;top:104px" width="9" height="6"><path d="M0,5.5 L4.5,0.5 L9,5.5 Z" fill="#a3a3a3"/></svg>
<div class="a" style="left:1008px;top:115px;width:11px;height:388px;background:#c1c1c1"></div>
<svg style="left:1010px;top:633px" width="9" height="6"><path d="M0,0.5 L4.5,5.5 L9,0.5 Z" fill="#505050"/></svg>

<!-- breadcrumb -->
<div class="a" style="left:270px;top:645px;width:752px;height:26px;background:#2b2b2b"></div>
<div class="t" style="left:298px;top:651px;font-size:12px;color:#d0d0d0">mainpage</div>
<svg style="left:361px;top:652px" width="7" height="11"><path d="M1,1 L5.5,5.5 L1,10" fill="none" stroke="#c8c8c8" stroke-width="1.3"/></svg>
<div class="t" style="left:378px;top:651px;font-size:12px;color:#d0d0d0">content</div>
<svg style="left:429px;top:652px" width="7" height="11"><path d="M1,1 L5.5,5.5 L1,10" fill="none" stroke="#c8c8c8" stroke-width="1.3"/></svg>
<div class="t" style="left:446px;top:651px;font-size:12px;color:#d0d0d0;letter-spacing:-0.2px">mainContent</div>
<svg style="left:525px;top:652px" width="7" height="11"><path d="M1,1 L5.5,5.5 L1,10" fill="none" stroke="#c8c8c8" stroke-width="1.3"/></svg>
<div class="t" style="left:541px;top:651px;font-size:12px;color:#3f8ee8;letter-spacing:-0.2px">EmployeeList1</div>
<!-- ===== WIDGET TEMPLATE PANEL ===== -->
<div class="a" style="left:818px;top:87px;width:190px;height:558px;background:#2b2b2b;border:1px solid #3e3e3e;border-radius:0 3px 3px 0;box-shadow:-3px 0 14px rgba(0,0,0,0.16)"></div>
<div class="a" style="left:999px;top:90px;width:7px;height:433px;border-radius:4px;background:#4a4a4a"></div>
<!-- action list card -->
<div class="a" style="left:829px;top:98px;width:168px;height:167px;border-radius:5px;background:linear-gradient(180deg,#8f8f8f,#7a7a7a)"></div>
<div class="a" style="left:833px;top:110px;width:160px;height:120px;background:#fff;overflow:hidden">
 <div class="a" style="left:0;top:35px;width:160px;height:1px;background:#e6e6e6"></div>
 <div class="a" style="left:0;top:70px;width:160px;height:1px;background:#e6e6e6"></div>
 <div class="a" style="left:0;top:105px;width:160px;height:1px;background:#e6e6e6"></div>
 <svg style="left:7px;top:5px" width="19" height="19" viewBox="0 0 20 20"><defs><clipPath id="aa1"><circle cx="10" cy="10" r="9.8"/></clipPath></defs><g clip-path="url(#aa1)"><rect width="20" height="20" fill="#b9b49a"/><path d="M1.5,21 Q2.5,14.8 10,14.5 Q17.5,14.8 18.5,21 Z" fill="#23232c"/><ellipse cx="10" cy="9.8" rx="3.9" ry="4.9" fill="#d9a98a"/><path d="M5.8,9 Q5.3,3.6 10,3.6 Q14.7,3.6 14.2,9 Q13.6,6.2 10,6.3 Q6.4,6.2 5.8,9 Z" fill="#161616"/></g><circle cx="10" cy="10" r="9.7" fill="none"/></svg>
 <svg style="left:7px;top:40px" width="19" height="19" viewBox="0 0 20 20"><defs><clipPath id="aa2"><circle cx="10" cy="10" r="9.8"/></clipPath></defs><g clip-path="url(#aa2)"><rect width="20" height="20" fill="#ffffff"/><path d="M1.5,21 Q2.5,14.8 10,14.5 Q17.5,14.8 18.5,21 Z" fill="#8f9ae0"/><ellipse cx="10" cy="9.8" rx="3.9" ry="4.9" fill="#9a6448"/><path d="M5.8,9 Q5.3,3.6 10,3.6 Q14.7,3.6 14.2,9 Q13.6,6.2 10,6.3 Q6.4,6.2 5.8,9 Z" fill="#3a2418"/></g><circle cx="10" cy="10" r="9.7" fill="none"/></svg>
 <svg style="left:7px;top:75px" width="19" height="19" viewBox="0 0 20 20"><defs><clipPath id="aa3"><circle cx="10" cy="10" r="9.8"/></clipPath></defs><g clip-path="url(#aa3)"><rect width="20" height="20" fill="#a08a60"/><path d="M1.5,21 Q2.5,14.8 10,14.5 Q17.5,14.8 18.5,21 Z" fill="#f0f0f0"/><ellipse cx="10" cy="9.8" rx="3.9" ry="4.9" fill="#d9b095"/><path d="M5.8,9 Q5.3,3.6 10,3.6 Q14.7,3.6 14.2,9 Q13.6,6.2 10,6.3 Q6.4,6.2 5.8,9 Z" fill="#7a7a7a"/></g><circle cx="10" cy="10" r="9.7" fill="none"/></svg>
 <svg style="left:7px;top:110px" width="19" height="19" viewBox="0 0 20 20"><defs><clipPath id="aa4"><circle cx="10" cy="10" r="9.8"/></clipPath></defs><g clip-path="url(#aa4)"><rect width="20" height="20" fill="#f4e8e0"/><path d="M1.5,21 Q2.5,14.8 10,14.5 Q17.5,14.8 18.5,21 Z" fill="#ffffff"/><ellipse cx="10" cy="9.8" rx="3.9" ry="4.9" fill="#e7b89a"/><path d="M5.8,9 Q5.3,3.6 10,3.6 Q14.7,3.6 14.2,9 Q13.6,6.2 10,6.3 Q6.4,6.2 5.8,9 Z" fill="#8a4a28"/></g><circle cx="10" cy="10" r="9.7" fill="none" stroke="#ddd" stroke-width="0.7"/></svg>
 <div class="t" style="left:37px;top:7px;font-size:7px;font-weight:bold;color:#222">Eric</div>
 <div class="t" style="left:37px;top:20px;font-size:6px;color:#b0b0b0">Product Manager</div>
 <div class="t" style="left:37px;top:42px;font-size:7px;font-weight:bold;color:#222">Brad</div>
 <div class="t" style="left:37px;top:55px;font-size:6px;color:#b0b0b0">Engineer</div>
 <div class="t" style="left:37px;top:77px;font-size:7px;font-weight:bold;color:#222">Chris</div>
 <div class="t" style="left:37px;top:90px;font-size:6px;color:#b0b0b0">Architect</div>
 <div class="t" style="left:37px;top:112px;font-size:7px;font-weight:bold;color:#222">Amanda</div>
 <svg style="left:143px;top:14px" width="10" height="10"><circle cx="8" cy="2" r="1.4" fill="#222"/><circle cx="2" cy="5" r="1.4" fill="#222"/><circle cx="8" cy="8" r="1.4" fill="#222"/><path d="M8,2 L2,5 L8,8" fill="none" stroke="#222" stroke-width="0.8"/></svg>
 <svg style="left:143px;top:49px" width="10" height="10"><circle cx="8" cy="2" r="1.4" fill="#222"/><circle cx="2" cy="5" r="1.4" fill="#222"/><circle cx="8" cy="8" r="1.4" fill="#222"/><path d="M8,2 L2,5 L8,8" fill="none" stroke="#222" stroke-width="0.8"/></svg>
 <svg style="left:143px;top:84px" width="10" height="10"><circle cx="8" cy="2" r="1.4" fill="#222"/><circle cx="2" cy="5" r="1.4" fill="#222"/><circle cx="8" cy="8" r="1.4" fill="#222"/><path d="M8,2 L2,5 L8,8" fill="none" stroke="#222" stroke-width="0.8"/></svg>
</div>
<div class="t" style="left:829px;top:240px;width:168px;text-align:center;font-size:12px;color:#f0f0f0">Action List</div>
<!-- contact list -->
<div class="a" style="left:833px;top:288px;width:160px;height:120px;background:#fff;overflow:hidden">
 <div class="a" style="left:0;top:24.5px;width:160px;height:1px;background:#e2e2e2"></div>
 <div class="a" style="left:2px;top:50px;width:158px;height:25.5px;background:#ececec"></div>
 <div class="a" style="left:0;top:100px;width:160px;height:1px;background:#e2e2e2"></div>
 <svg style="left:5px;top:4px" width="17" height="17" viewBox="0 0 20 20"><defs><clipPath id="ca1"><circle cx="10" cy="10" r="9.8"/></clipPath></defs><g clip-path="url(#ca1)"><rect width="20" height="20" fill="#c8c8c8"/><path d="M1.5,21 Q2.5,14.8 10,14.5 Q17.5,14.8 18.5,21 Z" fill="#2a2a2a"/><ellipse cx="10" cy="9.8" rx="3.9" ry="4.9" fill="#d0d0d0"/><path d="M5.8,9 Q5.3,3.6 10,3.6 Q14.7,3.6 14.2,9 Q13.6,6.2 10,6.3 Q6.4,6.2 5.8,9 Z" fill="#1a1a1a"/></g><circle cx="10" cy="10" r="9.7" fill="none" stroke="#888" stroke-width="0.7"/></svg>
 <svg style="left:5px;top:29px" width="17" height="17" viewBox="0 0 20 20"><defs><clipPath id="ca2"><circle cx="10" cy="10" r="9.8"/></clipPath></defs><g clip-path="url(#ca2)"><rect width="20" height="20" fill="#ffffff"/><path d="M1.5,21 Q2.5,14.8 10,14.5 Q17.5,14.8 18.5,21 Z" fill="#bbb"/><ellipse cx="10" cy="9.8" rx="3.9" ry="4.9" fill="#777"/><path d="M5.8,9 Q5.3,3.6 10,3.6 Q14.7,3.6 14.2,9 Q13.6,6.2 10,6.3 Q6.4,6.2 5.8,9 Z" fill="#333"/></g><circle cx="10" cy="10" r="9.7" fill="none"/></svg>
 <svg style="left:5px;top:54px" width="17" height="17" viewBox="0 0 20 20"><defs><clipPath id="ca3"><circle cx="10" cy="10" r="9.8"/></clipPath></defs><g clip-path="url(#ca3)"><rect width="20" height="20" fill="#b0b0b0"/><path d="M1.5,21 Q2.5,14.8 10,14.5 Q17.5,14.8 18.5,21 Z" fill="#eee"/><ellipse cx="10" cy="9.8" rx="3.9" ry="4.9" fill="#d8d8d8"/><path d="M5.8,9 Q5.3,3.6 10,3.6 Q14.7,3.6 14.2,9 Q13.6,6.2 10,6.3 Q6.4,6.2 5.8,9 Z" fill="#555"/></g><circle cx="10" cy="10" r="9.7" fill="none" stroke="#777" stroke-width="0.7"/></svg>
 <svg style="left:5px;top:79px" width="17" height="17" viewBox="0 0 20 20"><defs><clipPath id="ca4"><circle cx="10" cy="10" r="9.8"/></clipPath></defs><g clip-path="url(#ca4)"><rect width="20" height="20" fill="#f4f4f4"/><path d="M1.5,21 Q2.5,14.8 10,14.5 Q17.5,14.8 18.5,21 Z" fill="#333"/><ellipse cx="10" cy="9.8" rx="3.9" ry="4.9" fill="#ccc"/><path d="M5.8,9 Q5.3,3.6 10,3.6 Q14.7,3.6 14.2,9 Q13.6,6.2 10,6.3 Q6.4,6.2 5.8,9 Z" fill="#222"/></g><circle cx="10" cy="10" r="9.7" fill="none" stroke="#bbb" stroke-width="0.7"/></svg>
 <svg style="left:5px;top:104px" width="17" height="17" viewBox="0 0 20 20"><defs><clipPath id="ca5"><circle cx="10" cy="10" r="9.8"/></clipPath></defs><g clip-path="url(#ca5)"><rect width="20" height="20" fill="#aaa"/><path d="M1.5,21 Q2.5,14.8 10,14.5 Q17.5,14.8 18.5,21 Z" fill="#222"/><ellipse cx="10" cy="9.8" rx="3.9" ry="4.9" fill="#bbb"/><path d="M5.8,9 Q5.3,3.6 10,3.6 Q14.7,3.6 14.2,9 Q13.6,6.2 10,6.3 Q6.4,6.2 5.8,9 Z" fill="#222"/></g><circle cx="10" cy="10" r="9.7" fill="none" stroke="#666" stroke-width="0.7"/></svg>
 <div class="t" style="left:33px;top:8px;font-size:6px;color:#444">Eric Lin</div>
 <div class="t" style="left:33px;top:33px;font-size:6px;color:#444">Brad Tucker</div>
 <div class="t" style="left:34px;top:59px;font-size:5.5px;color:#444">Chris Mildiom</div>
 <div class="t" style="left:33px;top:84px;font-size:6px;color:#444">Amanda Brown</div>
 <div class="t" style="left:33px;top:109px;font-size:6px;color:#444">Jane Lisa</div>
</div>
<div class="t" style="left:829px;top:418px;width:168px;text-align:center;font-size:12.5px;color:#8e8e8e">Contact List</div>
<!-- email list -->
<div class="a" style="left:833px;top:466px;width:160px;height:120px;background:#fff;overflow:hidden">
 <div class="a" style="left:2px;top:64px;width:158px;height:1px;background:#eee"></div>
 <svg style="left:6px;top:8px" width="16" height="16" viewBox="0 0 20 20"><defs><clipPath id="ea1"><circle cx="10" cy="10" r="9.8"/></clipPath></defs><g clip-path="url(#ea1)"><rect width="20" height="20" fill="#d0d0d0"/><path d="M1.5,21 Q2.5,14.8 10,14.5 Q17.5,14.8 18.5,21 Z" fill="#2a2a2a"/><ellipse cx="10" cy="9.8" rx="3.9" ry="4.9" fill="#d0d0d0"/><path d="M5.8,9 Q5.3,3.6 10,3.6 Q14.7,3.6 14.2,9 Q13.6,6.2 10,6.3 Q6.4,6.2 5.8,9 Z" fill="#1a1a1a"/></g><circle cx="10" cy="10" r="9.7" fill="none" stroke="#888" stroke-width="0.7"/></svg>
 <svg style="left:6px;top:69px" width="16" height="16" viewBox="0 0 20 20"><defs><clipPath id="ea2"><circle cx="10" cy="10" r="9.8"/></clipPath></defs><g clip-path="url(#ea2)"><rect width="20" height="20" fill="#ffffff"/><path d="M1.5,21 Q2.5,14.8 10,14.5 Q17.5,14.8 18.5,21 Z" fill="#bbb"/><ellipse cx="10" cy="9.8" rx="3.9" ry="4.9" fill="#777"/><path d="M5.8,9 Q5.3,3.6 10,3.6 Q14.7,3.6 14.2,9 Q13.6,6.2 10,6.3 Q6.4,6.2 5.8,9 Z" fill="#333"/></g><circle cx="10" cy="10" r="9.7" fill="none"/></svg>
 <div class="t" style="left:33px;top:8px;font-size:5.5px;color:#333">Eric Lin</div>
 <div class="t" style="left:125px;top:8px;font-size:5.3px;color:#333">1973-10-21</div>
 <div class="t" style="left:33px;top:17px;font-size:5.5px;color:#222">Product Manager</div>
 <div class="a" style="left:33px;top:28px;width:116px;height:31px;font-size:4.85px;line-height:6.15px;color:#9a9a9a;white-space:normal;overflow:hidden">Lorem Ipsum is simply dummy text of the printing and typesetting industry. Lorem Ipsum has been the industry's standard dummy text ever since the 1500s, when an unknown printer took a galley of type and scrambled it to make a type specimen book. It has sur</div>
 <div class="t" style="left:33px;top:69px;font-size:5.5px;color:#333">Brad Tucker</div>
 <div class="t" style="left:125px;top:69px;font-size:5.3px;color:#333">1991-03-19</div>
 <div class="t" style="left:33px;top:78px;font-size:5.5px;color:#222">Engineer</div>
 <div class="a" style="left:33px;top:89px;width:116px;height:31px;font-size:4.85px;line-height:6.15px;color:#9a9a9a;white-space:normal;overflow:hidden">Lorem Ipsum is simply dummy text of the printing and typesetting industry. Lorem Ipsum has been the industry's standard dummy text ever since the 1500s, when an unknown printer took a galley of type and scrambled it to make a type specimen book. It has sur</div>
</div>
<div class="t" style="left:829px;top:596px;width:168px;text-align:center;font-size:12.5px;color:#8e8e8e">Email List</div>

<!-- tooltip -->
<div class="a" style="left:845px;top:75px;width:133px;height:26px;background:#0b0b0b;border:1px solid #e0e0e0"></div>
<div class="t" style="left:853px;top:80px;font-size:15px;color:#fff;letter-spacing:0.25px">Widget Template</div>

<!-- ===== RIGHT PANEL ===== -->
<div class="a" style="left:1021px;top:50px;width:1px;height:621px;background:#000"></div>
<div class="a" style="left:1022px;top:50px;width:248px;height:621px;background:#424242"></div>
<div class="a" style="left:1022px;top:50px;width:248px;height:37px;background:#3d3d3d"></div>
<div class="t" style="left:1034px;top:62px;font-size:14px;color:#dedede">wm-list: EmployeeList1</div>
<!-- tabs -->
<div class="a" style="left:1078px;top:87px;width:192px;height:37px;background:#111"></div>
<div class="a" style="left:1022px;top:87px;width:56px;height:2px;background:#3a86f0"></div>
<svg style="left:1043px;top:97px" width="14" height="18"><path d="M3.5,17 L1.5,17.5 L2,15 L10.5,1 L13,2.5 Z M2,15 L4.5,16.5" fill="none" stroke="#fff" stroke-width="1.3" stroke-linejoin="round"/><path d="M4,15.5 L11.5,2.8" stroke="#fff" stroke-width="2"/></svg>
<svg style="left:1096px;top:97px" width="21" height="18"><path d="M9,1 C4,1 1,5 1,9 C1,14 5,17 9,17 C11,17 11,15 10,14 C9,13 10,11.5 12,11.5 H14 C17,11.5 19,9.5 19,7 C19,3.5 14.5,1 9,1 Z" fill="none" stroke="#8a8a8a" stroke-width="1.2"/><circle cx="5" cy="8" r="1.2" fill="none" stroke="#8a8a8a"/><circle cx="8" cy="4.5" r="1.2" fill="none" stroke="#8a8a8a"/><circle cx="12.5" cy="4.5" r="1.2" fill="none" stroke="#8a8a8a"/><path d="M20,1 L12,11" stroke="#8a8a8a" stroke-width="1.2"/></svg>
<svg style="left:1153px;top:97px" width="19" height="18"><path d="M7,14.5 A6.5,6.5 0 1 1 14,8" fill="none" stroke="#8a8a8a" stroke-width="1.3"/><path d="M8.5,8 L17.5,11.5 L13.5,12.8 L16.5,16.5 L15,17.5 L12,14 L9.8,17 Z" fill="none" stroke="#8a8a8a" stroke-width="1.1" stroke-linejoin="round"/></svg>
<svg style="left:1209px;top:100px" width="19" height="13"><path d="M12,10 H2 Q0.6,10 0.6,8.6 V2 Q0.6,0.6 2,0.6 H14 Q15.4,0.6 15.4,2 V4" fill="none" stroke="#8a8a8a" stroke-width="1.1"/><path d="M4.5,12 H11" stroke="#8a8a8a" stroke-width="1.1"/><rect x="12.2" y="4.8" width="5.6" height="7.4" rx="1" fill="none" stroke="#8a8a8a" stroke-width="1.1"/></svg>
<svg style="left:1266px;top:98px" width="8" height="17"><path d="M7,1 Q4,2.5 1,2.5 V8 Q1,13 7,16" fill="none" stroke="#8a8a8a" stroke-width="1.2"/></svg>
<!-- search -->
<div class="a" style="left:1030px;top:132px;width:260px;height:28px;border:1px solid #5a5a5a;border-radius:3px;background:#2c2c2c"></div>
<svg style="left:1039px;top:139px" width="12" height="13"><circle cx="5.3" cy="5.3" r="4.5" fill="none" stroke="#9a9a9a" stroke-width="1.2"/><path d="M8.5,8.5 L11.5,11.8" stroke="#9a9a9a" stroke-width="1.3"/></svg>
<div class="t" style="left:1056px;top:141px;font-size:10.5px;color:#858585">Search...</div>
<div class="a" style="left:1022px;top:168px;width:248px;height:1px;background:#333"></div>
<!-- fields -->
<div class="t" style="left:1032px;top:183px;font-size:11px;color:#cfcfcf">Title</div>
<div class="a" style="left:1032px;top:201px;width:222px;height:28px;border:1px solid #575757;border-radius:3px;background:#2c2c2c"></div>
<svg style="left:1262px;top:211px" width="12" height="12"><g transform="rotate(-45 6 6)"><rect x="0.5" y="3.6" width="8.5" height="4.8" rx="2.4" fill="none" stroke="#b8b8b8" stroke-width="1.2"/><rect x="5.5" y="3.6" width="8.5" height="4.8" rx="2.4" fill="none" stroke="#b8b8b8" stroke-width="1.2"/></g></svg>
<div class="t" style="left:1032px;top:247px;font-size:11px;color:#cfcfcf">Sub Heading</div>
<div class="a" style="left:1032px;top:265px;width:222px;height:28px;border:1px solid #575757;border-radius:3px;background:#2c2c2c"></div>
<svg style="left:1262px;top:275px" width="12" height="12"><g transform="rotate(-45 6 6)"><rect x="0.5" y="3.6" width="8.5" height="4.8" rx="2.4" fill="none" stroke="#b8b8b8" stroke-width="1.2"/><rect x="5.5" y="3.6" width="8.5" height="4.8" rx="2.4" fill="none" stroke="#b8b8b8" stroke-width="1.2"/></g></svg>
<div class="t" style="left:1032px;top:311px;font-size:11px;color:#cfcfcf">Name</div>
<div class="a" style="left:1032px;top:329px;width:222px;height:28px;border:1px solid #575757;border-radius:3px;background:#2c2c2c"></div>
<div class="t" style="left:1043px;top:337px;font-size:11px;color:#e0e0e0">EmployeeList1</div>
<div class="a" style="left:1022px;top:371px;width:248px;height:24px;background:#212121"></div>
<div class="t" style="left:1032px;top:376px;font-size:13px;color:#dedede">Accessibility</div>
<div class="t" style="left:1032px;top:412px;font-size:11px;color:#cfcfcf">Tab Index</div>
<div class="a" style="left:1032px;top:430px;width:222px;height:28px;border:1px solid #575757;border-radius:3px;background:#2c2c2c"></div>
<div class="t" style="left:1043px;top:438px;font-size:11px;color:#e0e0e0">0</div>
<div class="a" style="left:1022px;top:472px;width:248px;height:24px;background:#212121"></div>
<div class="t" style="left:1032px;top:477px;font-size:13px;color:#dedede">Layout</div>
<div class="t" style="left:1032px;top:513px;font-size:11px;color:#cfcfcf">Width</div>
<div class="a" style="left:1032px;top:531px;width:222px;height:28px;border:1px solid #575757;border-radius:3px;background:#2c2c2c"></div>
<div class="t" style="left:1032px;top:577px;font-size:11px;color:#cfcfcf">Height</div>
<div class="a" style="left:1032px;top:595px;width:222px;height:28px;border:1px solid #575757;border-radius:3px;background:#2c2c2c"></div>
<div class="a" style="left:1022px;top:637px;width:248px;height:25px;background:#212121"></div>
<div class="t" style="left:1032px;top:642px;font-size:13px;color:#dedede">Dataset</div>
</body></html>
